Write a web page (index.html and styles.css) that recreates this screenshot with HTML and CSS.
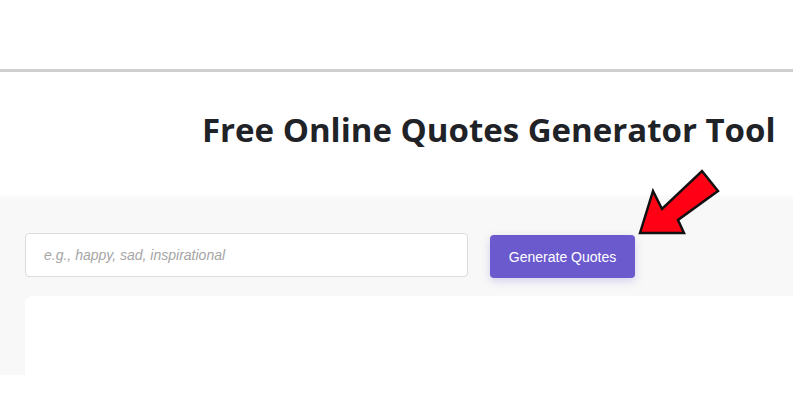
FILE: index.html
```html
<!DOCTYPE html>
<html lang="en">
<head>
<meta charset="utf-8">
<title>Free Online Quotes Generator Tool</title>
<link rel="stylesheet" href="styles.css">
</head>
<body>
<div class="page">
  <div class="top"></div>
  <div class="rule"></div>
  <h1 class="title">Free Online Quotes Generator Tool</h1>
  <section class="panel">
    <div class="row">
      <input class="topic" type="text" placeholder="e.g., happy, sad, inspirational">
      <button class="generate" type="button">Generate Quotes</button>
    </div>
    <div class="card"></div>
  </section>
  <svg class="arrow" width="90" height="75" viewBox="630 165 90 75" xmlns="http://www.w3.org/2000/svg">
    <polygon points="640,233 653,191 662,209 702,171 718,191 678,220 684,233" fill="#ff0015" stroke="#111" stroke-width="2.5" stroke-linejoin="miter"/>
  </svg>
</div>
</body>
</html>
```
FILE: styles.css
```css
html, body {
  margin: 0;
  padding: 0;
  background: #ffffff;
}
.page {
  position: relative;
  width: 793px;
  height: 400px;
  font-family: "Liberation Sans", Arial, sans-serif;
}
.top {
  height: 69px;
}
.rule {
  height: 3px;
  background: #cfcfcf;
}
.title {
  margin: 38px 0 45px 0;
  padding-left: 202px;
  height: 40px;
  line-height: 40px;
  font-family: "Open Sans", "Noto Sans", sans-serif;
  font-weight: 700;
  font-size: 33px;
  color: #1f2328;
  white-space: nowrap;
}
.panel {
  height: 180px;
  box-sizing: border-box;
  padding: 38px 0 0 25px;
  background: linear-gradient(#fcfcfc 0px, #f8f8f8 6px, #f8f8f8 100%);
}
.row {
  display: flex;
  align-items: flex-start;
  gap: 22px;
  height: 45px;
}
.topic {
  box-sizing: border-box;
  width: 443px;
  height: 44px;
  margin: 0;
  padding: 0 18px;
  border: 1px solid #dcdcdc;
  border-radius: 4px;
  background: #ffffff;
  font-family: "Liberation Sans", Arial, sans-serif;
  font-size: 14px;
  color: #333;
  outline: none;
}
.topic::placeholder {
  color: #a5a5a5;
  font-style: italic;
}
.generate {
  box-sizing: border-box;
  width: 145px;
  height: 43px;
  margin-top: 2px;
  border: none;
  border-radius: 4px;
  background: #6a5acd;
  color: #ffffff;
  font-family: "Liberation Sans", Arial, sans-serif;
  font-size: 14px;
  box-shadow: 0 3px 8px rgba(106, 90, 205, 0.25);
  cursor: pointer;
}
.card {
  margin-top: 18px;
  height: 79px;
  background: #ffffff;
  border-radius: 8px 0 0 0;
}
.arrow {
  position: absolute;
  left: 630px;
  top: 165px;
}
```
